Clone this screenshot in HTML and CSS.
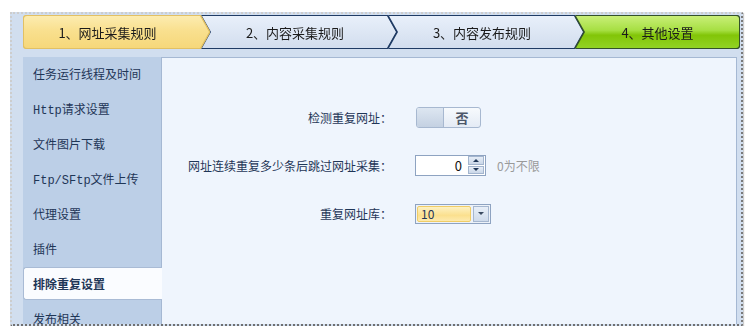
FILE: index.html
```html
<!DOCTYPE html>
<html lang="zh-CN">
<head>
  <meta charset="UTF-8">
  <title>排除重复设置</title>
  <link rel="stylesheet" href="styles.css">
</head>
<body>
  <div class="frame">
    <!-- Step bar -->
    <div class="steps">
      <div class="step step-first"><div class="step-face">1、网址采集规则</div></div>
      <div class="step step-mid"><div class="step-face">2、内容采集规则</div></div>
      <div class="step step-mid"><div class="step-face">3、内容发布规则</div></div>
      <div class="step step-last"><div class="step-face">4、其他设置</div></div>
    </div>

    <div class="body">
      <!-- Left menu -->
      <ul class="side-menu">
        <li class="side-item">任务运行线程及时间</li>
        <li class="side-item">Http请求设置</li>
        <li class="side-item">文件图片下载</li>
        <li class="side-item">Ftp/SFtp文件上传</li>
        <li class="side-item">代理设置</li>
        <li class="side-item">插件</li>
        <li class="side-item active">排除重复设置</li>
        <li class="side-item">发布相关</li>
      </ul>

      <!-- Settings form -->
      <div class="content">
        <div class="form-grid">
          <label class="form-label">检测重复网址：</label>
          <div class="form-field">
            <div class="toggle">
              <span class="toggle-knob"></span>
              <span class="toggle-text">否</span>
            </div>
          </div>

          <label class="form-label">网址连续重复多少条后跳过网址采集：</label>
          <div class="form-field">
            <div class="spinner">
              <span class="spin-value">0</span>
              <div class="spin-buttons">
                <span class="spin-btn spin-up"></span>
                <span class="spin-btn spin-down"></span>
              </div>
            </div>
            <span class="hint">0为不限</span>
          </div>

          <label class="form-label">重复网址库：</label>
          <div class="form-field">
            <div class="combo">
              <span class="combo-value">10</span>
              <span class="combo-btn"></span>
            </div>
          </div>
        </div>
      </div>
    </div>
  </div>
</body>
</html>
```

FILE: styles.css
```css
/* Global styles */
body {
  margin: 0;
  background-color: #fff;
  font-family: "Noto Sans CJK SC", sans-serif;
}

/* Outer panel with torn edge */
.frame {
  box-sizing: border-box;
  width: 733px;
  height: 314px;
  margin: 12px 0 0 10px;
  padding: 1px 1px 0 11px;
  background-color: #d1deef;
  border: 2px dotted;
  border-color: #cdcdcd #7a7a7a #707070 #cdcdcd;
  box-shadow: 1px 1px 1px rgba(0, 0, 0, 0.2);
  display: flex;
  flex-direction: column;
  overflow: hidden;
}

/* Step bar */
.steps {
  display: flex;
  height: 34px;
  flex-shrink: 0;
}

.step {
  height: 34px;
  filter: drop-shadow(1px 0 0 #1f3b64) drop-shadow(-1px 0 0 #1f3b64) drop-shadow(0 1px 0 #1f3b64) drop-shadow(0 -1px 0 #1f3b64);
}

.step-face {
  box-sizing: border-box;
  height: 32px;
  margin: 1px;
  display: flex;
  align-items: center;
  justify-content: center;
  font-size: 13px;
  color: #1b1b1b;
  background: linear-gradient(#e8effa, #dbe5f3 60%, #d2ddee);
  clip-path: polygon(0 0, calc(100% - 9px) 0, 100% 50%, calc(100% - 9px) 100%, 0 100%, 9px 50%);
  padding-right: 8px;
}

.step-first {
  width: 187px;
  position: relative;
  z-index: 1;
  filter: drop-shadow(1px 0 0 #e2c063) drop-shadow(-1px 0 0 #e2c063) drop-shadow(0 1px 0 #e2c063) drop-shadow(0 -1px 0 #e2c063);
}

.step-first .step-face {
  background: linear-gradient(#fcecb0, #f9e08f 45%, #f6d77a);
  clip-path: polygon(0 0, calc(100% - 9px) 0, 100% 50%, calc(100% - 9px) 100%, 0 100%);
  border-radius: 3px 0 0 3px;
  padding-right: 18px;
}

.step-mid {
  width: 196px;
  margin-left: -9px;
}

.step-last {
  width: 165px;
  margin-left: -9px;
  filter: drop-shadow(1px 0 0 #34512b) drop-shadow(-1px 0 0 #34512b) drop-shadow(0 1px 0 #34512b) drop-shadow(0 -1px 0 #34512b);
}

.step-last .step-face {
  background: linear-gradient(#c9ef78, #a6df42 45%, #82c508 60%, #92d324);
  clip-path: polygon(0 0, 100% 0, 100% 100%, 0 100%, 9px 50%);
  border-radius: 0 3px 3px 0;
  padding-right: 0;
}

/* Body below the steps */
.body {
  display: flex;
  flex: 1;
  min-height: 0;
  margin: 8px 3px 0 0;
}

/* Left menu */
.side-menu {
  width: 138px;
  flex-shrink: 0;
  list-style: none;
  margin: 0;
  padding: 0;
  background-color: #bccfe7;
  font-family: "Liberation Mono", "Noto Sans CJK SC", monospace;
}

.side-item {
  box-sizing: border-box;
  height: 33px;
  margin-bottom: 2px;
  padding-left: 10px;
  display: flex;
  align-items: center;
  font-size: 12px;
  color: #1f3657;
}

.side-item.active {
  position: relative;
  z-index: 1;
  margin-right: -1px;
  padding-left: 9px;
  background-color: #fafcff;
  border: 1px solid #a9bbd5;
  border-right: none;
  border-radius: 3px 0 0 3px;
  font-weight: bold;
}

/* Content area */
.content {
  flex: 1;
  background-color: #eff5fd;
  border: 1px solid #a5b8d3;
  border-bottom: none;
}

.form-grid {
  display: grid;
  grid-template-columns: 230px auto;
  grid-auto-rows: 21px;
  column-gap: 23px;
  row-gap: 27px;
  align-items: center;
  padding-top: 49px;
}

.form-label {
  text-align: right;
  font-size: 12px;
  color: #1f3657;
}

.form-field {
  display: flex;
  align-items: center;
  gap: 11px;
}

/* Toggle switch */
.toggle {
  box-sizing: border-box;
  display: flex;
  width: 65px;
  height: 21px;
  margin-left: 1px;
  border: 1px solid #a7b8d0;
  border-radius: 3px;
  background: linear-gradient(#f7fafd, #e4ebf5);
}

.toggle-knob {
  width: 26px;
  border-right: 1px solid #a7b8d0;
  border-radius: 2px 0 0 2px;
  background: linear-gradient(#dde6f1, #c4d1e2);
}

.toggle-text {
  flex: 1;
  text-align: center;
  font-size: 13px;
  line-height: 19px;
  font-weight: bold;
  color: #4c5769;
}

/* Number spinner */
.spinner {
  box-sizing: border-box;
  display: flex;
  width: 71px;
  height: 21px;
  border: 1px solid #8ea3c1;
  background-color: #fff;
}

.spin-value {
  flex: 1;
  text-align: right;
  padding-right: 6px;
  font-size: 13px;
  line-height: 19px;
  color: #111;
}

.spin-buttons {
  width: 16px;
  display: flex;
  flex-direction: column;
  gap: 1px;
  padding: 0 1px 1px 0;
}

.spin-btn {
  flex: 1;
  display: flex;
  align-items: center;
  justify-content: center;
  border: 1px solid #a3b5ce;
  background: linear-gradient(#e6edf7, #cad7e8);
}

.spin-up::after {
  content: "";
  border: 3px solid transparent;
  border-top: none;
  border-bottom: 3px solid #1f3657;
}

.spin-down::after {
  content: "";
  border: 3px solid transparent;
  border-bottom: none;
  border-top: 3px solid #1f3657;
}

.hint {
  font-size: 12px;
  color: #9a9a9a;
}

/* Combo box */
.combo {
  box-sizing: border-box;
  display: flex;
  width: 76px;
  height: 20px;
  padding: 1px;
  gap: 2px;
  border: 1px solid #8ea3c1;
  background-color: #edf2f9;
}

.combo-value {
  flex: 1;
  padding-left: 3px;
  border: 1px solid #f0cd66;
  border-radius: 2px;
  background: linear-gradient(#fdf1c2, #fbe08e 60%, #fdeaae);
  font-size: 12px;
  line-height: 14px;
  color: #1f3657;
}

.combo-btn {
  width: 14px;
  display: flex;
  align-items: center;
  justify-content: center;
  border: 1px solid #a6b7cf;
  background: linear-gradient(#e8eff8, #cfdbeb);
}

.combo-btn::after {
  content: "";
  border: 3px solid transparent;
  border-bottom: none;
  border-top: 3px solid #3a4a60;
}
```
